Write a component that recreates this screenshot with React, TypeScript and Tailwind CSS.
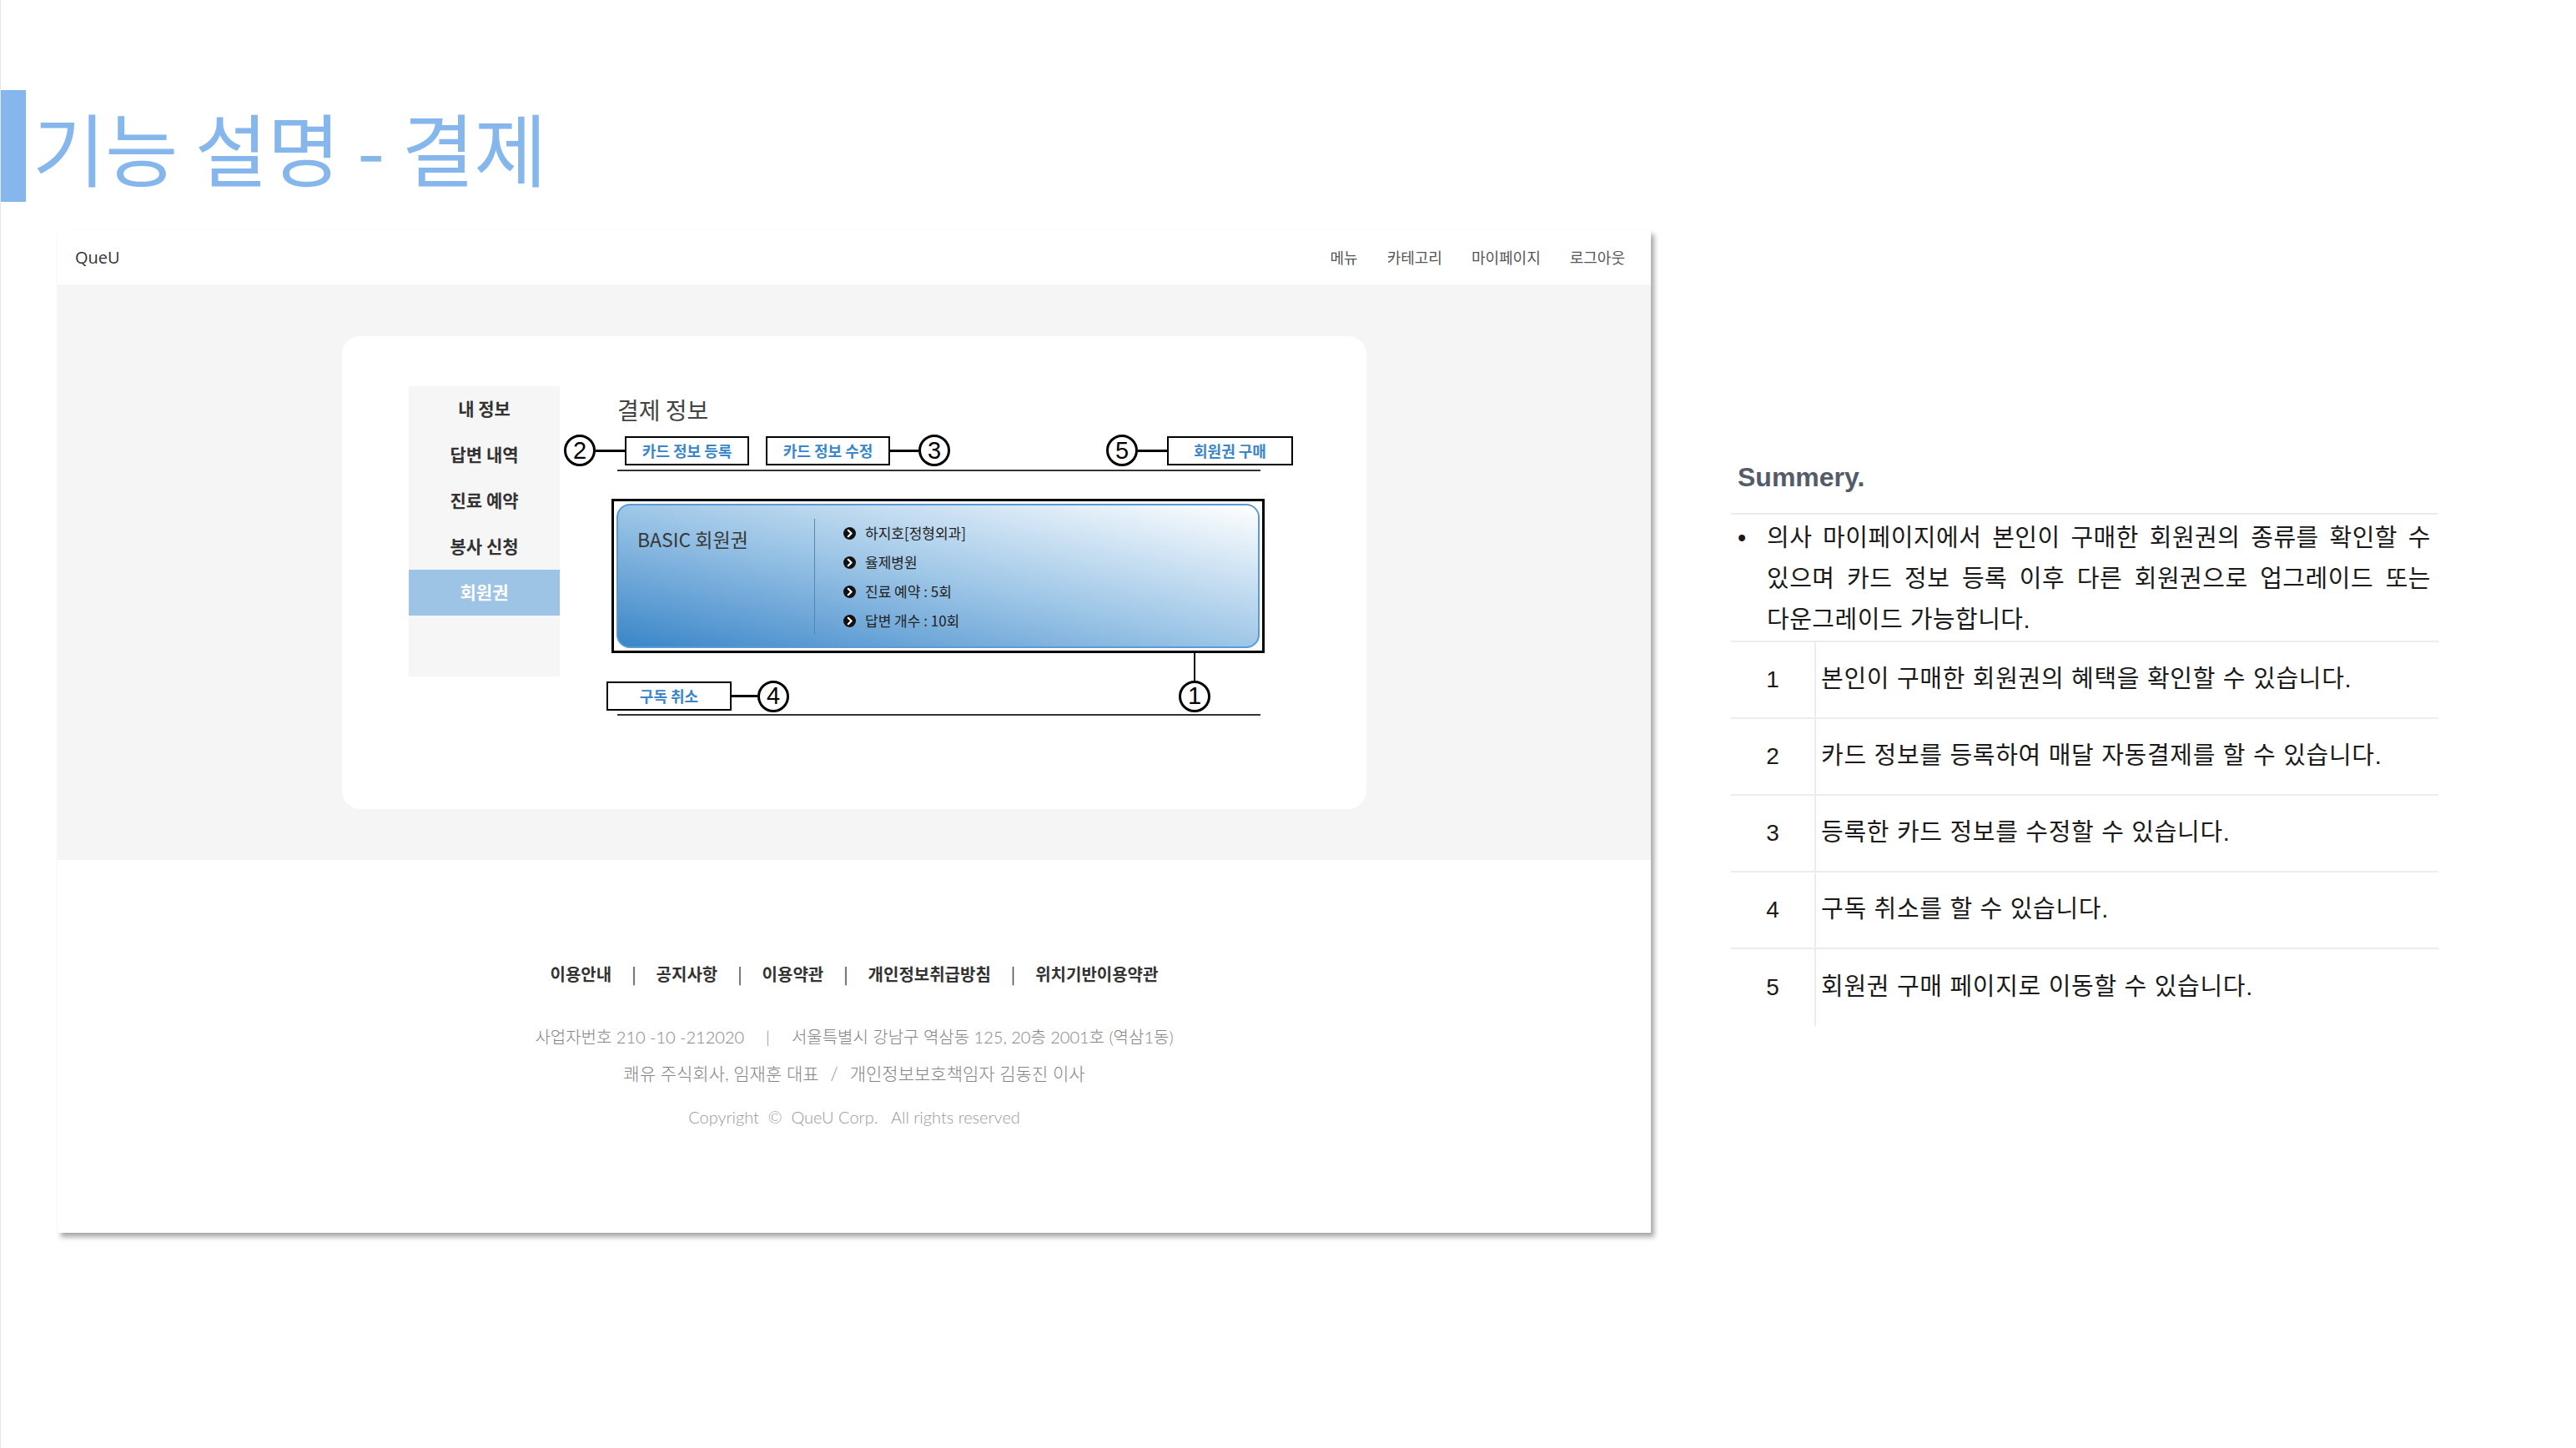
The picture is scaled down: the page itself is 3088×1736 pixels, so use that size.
import React from 'react';

const Num = ({ n }: { n: string }) => (
  <div className="w-[38px] h-[38px] shrink-0 rounded-full border-[3px] border-black flex items-center justify-center bg-white font-['Liberation_Sans',sans-serif] text-[29px] leading-none text-black">
    {n}
  </div>
);

const Hline = ({ w }: { w: string }) => <div className={`${w} h-[3px] bg-black shrink-0`} />;

const Btn = ({ label, w }: { label: string; w: string }) => (
  <div className={`${w} h-[35px] shrink-0 border-2 border-black bg-white flex items-center justify-center text-[18px] font-bold text-[#3b86c8]`}>
    {label}
  </div>
);

const Bullet = () => (
  <svg width="15" height="15" viewBox="0 0 15 15" className="shrink-0">
    <circle cx="7.5" cy="7.5" r="7.5" fill="#111" />
    <path d="M5.8 3.8 L9.6 7.5 L5.8 11.2" stroke="#fff" strokeWidth="2.2" fill="none" strokeLinecap="round" strokeLinejoin="round" />
  </svg>
);

const rows = [
  '본인이 구매한 회원권의 혜택을 확인할 수 있습니다.',
  '카드 정보를 등록하여 매달 자동결제를 할 수 있습니다.',
  '등록한 카드 정보를 수정할 수 있습니다.',
  '구독 취소를 할 수 있습니다.',
  '회원권 구매 페이지로 이동할 수 있습니다.',
];

const perks = ['하지호[정형외과]', '율제병원', '진료 예약 : 5회', '답변 개수 : 10회'];

export default function App() {
  return (
    <div className="w-[3088px] h-[1736px] bg-white overflow-hidden border-l border-[#e6e6e6] font-['Noto_Sans_CJK_KR',sans-serif]">
      {/* title */}
      <div className="flex items-center pt-[108px]">
        <div className="w-[30px] h-[134px] bg-[#85b6ec]" />
        <h1 className="ml-[8px] text-[95px] leading-none tracking-[-0.5px] font-normal text-[#85b6ec]">기능 설명 - 결제</h1>
      </div>

      <div className="flex items-start mt-[34px]">
        {/* screenshot frame */}
        <div className="ml-[68px] w-[1910px] h-[1202px] bg-white shadow-[4px_5px_6px_rgba(0,0,0,0.35)] flex flex-col">
          <div className="h-[65px] flex items-center justify-between pl-[21px] pr-[31px]">
            <span className="font-['Open_Sans',sans-serif] text-[20px] text-[#333]">QueU</span>
            <div className="flex gap-[35px] text-[18px] text-[#555]">
              <span>메뉴</span>
              <span>카테고리</span>
              <span>마이페이지</span>
              <span>로그아웃</span>
            </div>
          </div>

          <div className="h-[690px] bg-[#f5f5f5] flex items-center justify-center">
            <div className="w-[1228px] h-[567px] bg-white rounded-[22px] flex pt-[60px] pl-[80px]">
              {/* sidebar */}
              <div className="w-[181px] h-[348px] bg-[#f6f6f6] flex flex-col text-[21px] font-bold text-[#333]">
                <div className="h-[55px] flex items-center justify-center">내 정보</div>
                <div className="h-[55px] flex items-center justify-center">답변 내역</div>
                <div className="h-[55px] flex items-center justify-center">진료 예약</div>
                <div className="h-[55px] flex items-center justify-center">봉사 신청</div>
                <div className="h-[55px] flex items-center justify-center bg-[#9dc3e5] text-white">회원권</div>
              </div>

              {/* content */}
              <div className="ml-[5px] w-[874px] pt-[11px] flex flex-col">
                <div className="ml-[64px] text-[28px] leading-[34px] text-[#444]">결제 정보</div>

                <div className="mt-[13px] h-[39px] flex items-center">
                  <Num n="2" />
                  <Hline w="w-[35px]" />
                  <Btn label="카드 정보 등록" w="w-[149px]" />
                  <div className="ml-[20px]">
                    <Btn label="카드 정보 수정" w="w-[149px]" />
                  </div>
                  <Hline w="w-[34px]" />
                  <Num n="3" />
                  <div className="ml-auto flex items-center">
                    <Num n="5" />
                    <Hline w="w-[35px]" />
                    <Btn label="회원권 구매" w="w-[151px]" />
                  </div>
                </div>
                <div className="mt-[3px] ml-[64px] w-[771px] h-[2px] bg-[#333]" />

                {/* membership card */}
                <div className="mt-[33px] ml-[57px] w-[783px] h-[185px] border-[3px] border-black p-[3px]">
                  <div className="h-full rounded-[16px] border-2 border-[#5b9bd5] bg-linear-to-tr from-[#3786c8] via-[#9fc7e7] to-[#ffffff] flex pl-[23px]">
                    <div className="w-[212px] pt-[26px] text-[23px] leading-[28px] text-[#383838]">BASIC 회원권</div>
                    <div className="mt-[16px] w-px h-[139px] bg-[#5c84a8]" />
                    <div className="ml-[34px] pt-[16px] flex flex-col">
                      {perks.map((p) => (
                        <div key={p} className="h-[35px] flex items-center gap-[11px] text-[17px] text-[#222]">
                          <Bullet />
                          <span>{p}</span>
                        </div>
                      ))}
                    </div>
                  </div>
                </div>

                <div className="flex items-end">
                  <div className="ml-[51px] flex items-center">
                    <Btn label="구독 취소" w="w-[150px]" />
                    <Hline w="w-[31px]" />
                    <Num n="4" />
                  </div>
                  <div className="ml-auto mr-[99px] flex flex-col items-center">
                    <div className="w-[2px] h-[33px] bg-black" />
                    <Num n="1" />
                  </div>
                </div>
                <div className="mt-[2px] ml-[64px] w-[771px] h-[2px] bg-[#333]" />
              </div>
            </div>
          </div>

          {/* footer */}
          <div className="flex-1 flex flex-col items-center">
            <div className="mt-[124px] flex items-center text-[20px] leading-[26px] font-bold text-[#333]">
              <span>이용안내</span>
              <span className="mx-[24px] font-normal">|</span>
              <span>공지사항</span>
              <span className="mx-[24px] font-normal">|</span>
              <span>이용약관</span>
              <span className="mx-[24px] font-normal">|</span>
              <span>개인정보취급방침</span>
              <span className="mx-[24px] font-normal">|</span>
              <span>위치기반이용약관</span>
            </div>
            <div className="mt-[40px] flex flex-col items-center font-['Lato','Noto_Sans_CJK_KR',sans-serif] font-light text-[20px] leading-[44px] text-[#858585]">
              <div>
                사업자번호 210 -10 -212020<span className="mx-[26px]">|</span>서울특별시 강남구 역삼동 125, 20층 2001호 (역삼1동)
              </div>
              <div className="text-[21px]">
                쾌유 주식회사, 임재훈 대표<span className="mx-[14px]">/</span>개인정보보호책임자 김동진 이사
              </div>
            </div>
            <div className="mt-[15px] font-['Lato','Noto_Sans_CJK_KR',sans-serif] font-light text-[20px] leading-[30px] text-[#999] whitespace-pre">
              Copyright  ©  QueU Corp.   All rights reserved
            </div>
          </div>
        </div>

        {/* summary panel */}
        <div className="ml-[96px] w-[848px] mt-[278px] font-['Liberation_Sans','Noto_Sans_CJK_KR',sans-serif] text-[#1a1a1a]">
          <div className="pl-[8px] pb-[25px] text-[32px] leading-[36px] font-bold text-[#545b6b] border-b-2 border-[#ececec]">Summery.</div>
          <div className="flex pl-[8px] pt-[4px] border-b-2 border-[#ececec] text-[29px] leading-[49px] tracking-[0.5px]">
            <span className="w-[35px]">•</span>
            <div className="w-[796px]">
              <span className="block [text-align-last:justify]">의사 마이페이지에서 본인이 구매한 회원권의 종류를 확인할 수</span>
              <span className="block [text-align-last:justify]">있으며 카드 정보 등록 이후 다른 회원권으로 업그레이드 또는</span>
              <span className="block">다운그레이드 가능합니다.</span>
            </div>
          </div>
          {rows.map((r, i) => (
            <div key={i} className={`h-[92px] flex ${i < rows.length - 1 ? 'border-b-2 border-[#ececec]' : ''}`}>
              <div className="w-[102px] border-r-2 border-[#ececec] flex items-center justify-center text-[28px]">{i + 1}</div>
              <div className="pl-[6px] flex items-center text-[29px] tracking-[0.7px]">{r}</div>
            </div>
          ))}
        </div>
      </div>
    </div>
  );
}
